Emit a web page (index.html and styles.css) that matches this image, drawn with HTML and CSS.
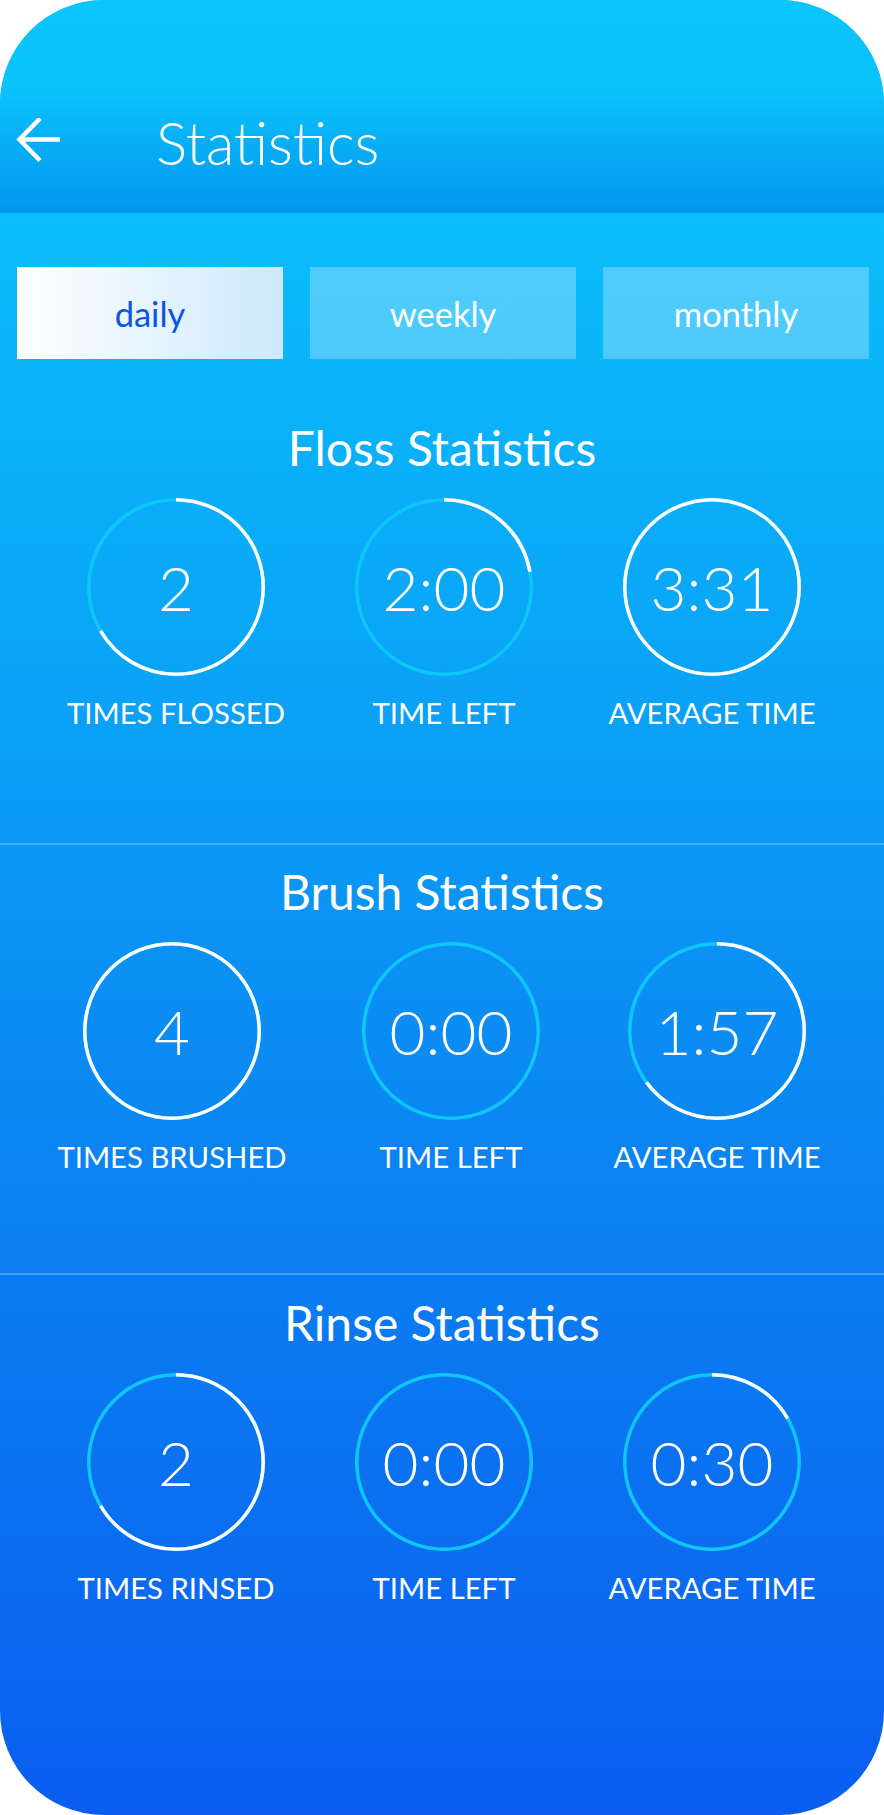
FILE: index.html
```html
<!DOCTYPE html>
<html lang="en">
<head>
<meta charset="utf-8">
<title>Statistics</title>
<link rel="stylesheet" href="styles.css">
</head>
<body>
<div class="phone">
  <header class="topbar">
    <svg class="back" viewBox="0 0 46 46" width="46" height="46" aria-hidden="true">
      <path d="M44 21.5 H4 M24 0.5 L3.5 21.5 L24 42.5" fill="none" stroke="#fff" stroke-width="4.5" stroke-linejoin="miter"/>
    </svg>
    <h1 class="topbar__title">Statistics</h1>
  </header>

  <nav class="tabs">
    <div class="tab tab--active">daily</div>
    <div class="tab">weekly</div>
    <div class="tab">monthly</div>
  </nav>

  <section class="section section--floss">
    <h2 class="section__title">Floss Statistics</h2>
    <div class="stats">
      <div class="stat">
        <div class="ring">
          <svg viewBox="0 0 178 178" width="178" height="178"><circle class="ring__base" cx="89" cy="89" r="87.25"/><circle class="ring__bar" cx="89" cy="89" r="87.25" pathLength="100" stroke-dasharray="66.6 100"/></svg>
          <span class="ring__value">2</span>
        </div>
        <div class="stat__label">TIMES FLOSSED</div>
      </div>
      <div class="stat">
        <div class="ring">
          <svg viewBox="0 0 178 178" width="178" height="178"><circle class="ring__base" cx="89" cy="89" r="87.25"/><circle class="ring__bar" cx="89" cy="89" r="87.25" pathLength="100" stroke-dasharray="22.2 100"/></svg>
          <span class="ring__value">2:00</span>
        </div>
        <div class="stat__label">TIME LEFT</div>
      </div>
      <div class="stat">
        <div class="ring">
          <svg viewBox="0 0 178 178" width="178" height="178"><circle class="ring__base" cx="89" cy="89" r="87.25"/><circle class="ring__bar" cx="89" cy="89" r="87.25" pathLength="100" stroke-dasharray="100 0"/></svg>
          <span class="ring__value">3:31</span>
        </div>
        <div class="stat__label">AVERAGE TIME</div>
      </div>
    </div>
  </section>

  <section class="section section--brush">
    <h2 class="section__title">Brush Statistics</h2>
    <div class="stats stats--brush">
      <div class="stat">
        <div class="ring">
          <svg viewBox="0 0 178 178" width="178" height="178"><circle class="ring__base" cx="89" cy="89" r="87.25"/><circle class="ring__bar" cx="89" cy="89" r="87.25" pathLength="100" stroke-dasharray="100 0"/></svg>
          <span class="ring__value">4</span>
        </div>
        <div class="stat__label">TIMES BRUSHED</div>
      </div>
      <div class="stat">
        <div class="ring">
          <svg viewBox="0 0 178 178" width="178" height="178"><circle class="ring__base" cx="89" cy="89" r="87.25"/></svg>
          <span class="ring__value">0:00</span>
        </div>
        <div class="stat__label">TIME LEFT</div>
      </div>
      <div class="stat">
        <div class="ring">
          <svg viewBox="0 0 178 178" width="178" height="178"><circle class="ring__base" cx="89" cy="89" r="87.25"/><circle class="ring__bar" cx="89" cy="89" r="87.25" pathLength="100" stroke-dasharray="65 100"/></svg>
          <span class="ring__value">1:57</span>
        </div>
        <div class="stat__label">AVERAGE TIME</div>
      </div>
    </div>
  </section>

  <section class="section section--rinse">
    <h2 class="section__title">Rinse Statistics</h2>
    <div class="stats">
      <div class="stat">
        <div class="ring">
          <svg viewBox="0 0 178 178" width="178" height="178"><circle class="ring__base" cx="89" cy="89" r="87.25"/><circle class="ring__bar" cx="89" cy="89" r="87.25" pathLength="100" stroke-dasharray="66.6 100"/></svg>
          <span class="ring__value">2</span>
        </div>
        <div class="stat__label">TIMES RINSED</div>
      </div>
      <div class="stat">
        <div class="ring">
          <svg viewBox="0 0 178 178" width="178" height="178"><circle class="ring__base" cx="89" cy="89" r="87.25"/></svg>
          <span class="ring__value">0:00</span>
        </div>
        <div class="stat__label">TIME LEFT</div>
      </div>
      <div class="stat">
        <div class="ring">
          <svg viewBox="0 0 178 178" width="178" height="178"><circle class="ring__base" cx="89" cy="89" r="87.25"/><circle class="ring__bar" cx="89" cy="89" r="87.25" pathLength="100" stroke-dasharray="16.7 100"/></svg>
          <span class="ring__value">0:30</span>
        </div>
        <div class="stat__label">AVERAGE TIME</div>
      </div>
    </div>
  </section>
</div>
</body>
</html>
```

FILE: styles.css
```css
* { box-sizing: border-box; }

html, body {
  margin: 0;
  padding: 0;
  background: #ffffff;
}

body {
  font-family: Lato, "Open Sans", "Liberation Sans", sans-serif;
  color: #ffffff;
}

.phone {
  width: 884px;
  height: 1815px;
  border-radius: 104px;
  overflow: hidden;
  background: linear-gradient(180deg, #0bc8fd 0%, #0aa6f7 35%, #0b86f2 62%, #0a5df0 100%);
}

.topbar {
  height: 213px;
  padding: 70px 0 0 16px;
  display: flex;
  align-items: center;
  background: linear-gradient(180deg, #0bc4fd 0%, #0bc3fc 40%, #0399ef 96%, #0291ed 100%);
}

.back {
  display: block;
  flex: none;
  margin-top: -2px;
}

.topbar__title {
  margin: 0 0 0 94px;
  font-weight: 300;
  font-size: 58.5px;
  line-height: normal;
}

.tabs {
  display: flex;
  gap: 27px;
  padding: 0 15px 0 17px;
  margin-top: 54px;
}

.tab {
  flex: 1;
  height: 92px;
  display: flex;
  align-items: center;
  justify-content: center;
  font-size: 34.5px;
  background: rgba(255, 255, 255, 0.28);
  color: #ffffff;
}

.tab--active {
  background: linear-gradient(90deg, #ffffff 0%, #cde9fb 100%);
  color: #0a55e8;
}

.section {
  border-bottom: 2px solid rgba(255, 255, 255, 0.25);
}

.section--floss { padding: 60px 0 113px; }
.section--brush { padding: 18px 0 99px; }
.section--rinse { padding: 19px 0 0; border-bottom: 0; }

.section__title {
  margin: 0;
  text-align: center;
  font-weight: 400;
  font-size: 48px;
  line-height: normal;
}

.stats {
  display: grid;
  grid-template-columns: repeat(3, 1fr);
  padding: 0 38px 0 42px;
  margin-top: 22px;
}

.stats--brush {
  grid-template-columns: 260px 298px 234px;
}

.stat {
  display: flex;
  flex-direction: column;
  align-items: center;
}

.ring {
  display: grid;
  place-items: center;
  width: 178px;
  height: 178px;
}

.ring svg {
  grid-area: 1 / 1;
  display: block;
}

.ring__base {
  fill: none;
  stroke: #0fc6fa;
  stroke-width: 3.5;
}

.ring__bar {
  fill: none;
  stroke: #ffffff;
  stroke-width: 3.5;
  transform: rotate(-90deg);
  transform-origin: 89px 89px;
}

.ring__value {
  grid-area: 1 / 1;
  font-weight: 300;
  font-size: 62px;
  line-height: normal;
}

.stat__label {
  margin-top: 19px;
  font-size: 29.3px;
  line-height: normal;
  white-space: nowrap;
}
```
